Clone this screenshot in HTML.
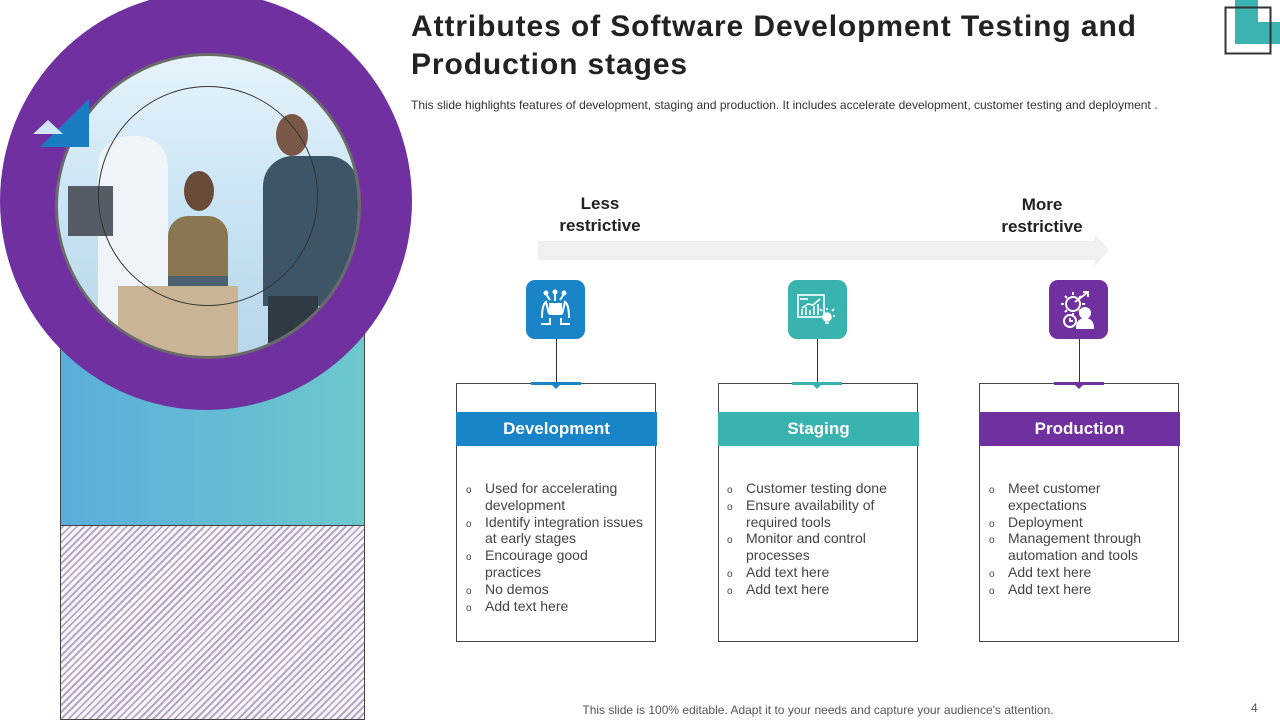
<!DOCTYPE html>
<html><head><meta charset="utf-8"><style>
*{margin:0;padding:0;box-sizing:border-box}
body{width:1280px;height:720px;background:#fff;position:relative;overflow:hidden;font-family:"Liberation Sans",sans-serif;color:#404040}
.abs{position:absolute}
.title{left:411px;top:8px;font-size:30px;font-weight:bold;color:#222;line-height:38px;letter-spacing:0.9px}
.sub{left:411px;top:98px;font-size:12px;color:#333;letter-spacing:0}
.lbl{font-weight:bold;font-size:17px;color:#222;text-align:center;line-height:22px;width:140px}
.icon{width:59px;height:59px;border-radius:9px;top:280px}
.vl{width:1px;background:#333;top:339px;height:44px}
.box{top:383px;width:200px;height:259px;border:1px solid #444;background:#fff}
.bar{top:412px;width:201px;height:34px;color:#fff;font-weight:bold;font-size:17px;text-align:center;line-height:34px}
.tab{top:382px;width:50px;height:3px}
.tri{top:384px;width:0;height:0;border-left:5px solid transparent;border-right:5px solid transparent;border-top:5px solid}
ul{list-style:none;font-size:14px;line-height:16.8px;color:#444}
ul li{padding-left:29px;position:relative}
ul li:before{content:"o";position:absolute;left:10px;top:3px;font-size:10px}
</style></head><body>
<div class="abs" style="left:60px;top:320px;width:305px;height:206px;background:linear-gradient(90deg,#5aaedb,#6cc8cc);border:1px solid #444;border-bottom:1px solid #333"></div>
<div class="abs" style="left:60px;top:525px;width:305px;height:195px;border:1px solid #444;background:repeating-linear-gradient(-45deg,#fbf4fb 0 3px,#b4a8c6 3px 5px)"></div>
<div class="abs" style="left:0;top:-8px;width:412px;height:418px;border-radius:50%;background:#7030a0"></div>
<div class="abs" style="left:55px;top:53px;width:306px;height:306px;border-radius:50%;background:#6a6a6a"></div>
<div class="abs" style="left:58px;top:56px;width:300px;height:300px;border-radius:50%;overflow:hidden;background:linear-gradient(180deg,#e6f3fb 0%,#c9e4f4 50%,#b7d6e8 100%)">
  <div class="abs" style="left:40px;top:80px;width:70px;height:200px;background:#eef4f8;border-radius:30px"></div>
  <div class="abs" style="left:10px;top:130px;width:45px;height:50px;background:#555c66"></div>
  <div class="abs" style="left:110px;top:160px;width:60px;height:140px;background:#8a7752;border-radius:20px 20px 0 0"></div>
  <div class="abs" style="left:126px;top:115px;width:30px;height:40px;background:#6a4a38;border-radius:50%"></div>
  <div class="abs" style="left:110px;top:220px;width:60px;height:60px;background:#4d6070"></div>
  <div class="abs" style="left:205px;top:100px;width:95px;height:150px;background:#3d5566;border-radius:30px 30px 0 0"></div>
  <div class="abs" style="left:218px;top:58px;width:32px;height:42px;background:#7a5848;border-radius:50%"></div>
  <div class="abs" style="left:210px;top:240px;width:50px;height:70px;background:#2e3a44"></div>
  <div class="abs" style="left:60px;top:230px;width:120px;height:70px;background:#c9b596"></div>
  <div class="abs" style="left:40px;top:30px;width:220px;height:220px;border-radius:50%;border:1px solid #333"></div>
</div>
<svg class="abs" style="left:30px;top:95px" width="62" height="55"><polygon points="59,4 59,52 10,52" fill="#1a7dc4"/><polygon points="3,39 33,39 18,25" fill="#cfe6f6"/></svg>
<svg class="abs" style="left:1222px;top:0" width="58" height="58"><polygon points="13,0 36,0 36,22 58,22 58,44 13,44" fill="#3bb3b0"/><rect x="3.5" y="7.5" width="45" height="46" fill="none" stroke="#333" stroke-width="2"/></svg>
<div class="abs title">Attributes of Software Development Testing and<br>Production stages</div>
<div class="abs sub">This slide highlights features of development, staging and production. It includes accelerate development, customer testing and deployment .</div>
<svg class="abs" style="left:538px;top:234px" width="572" height="32"><polygon points="0,7 557,7 557,0 571,16 557,32 557,26 0,26" fill="#f0f0f0"/></svg>
<div class="abs lbl" style="left:530px;top:193px">Less<br>restrictive</div>
<div class="abs lbl" style="left:972px;top:194px">More<br>restrictive</div>
<div class="abs icon" style="left:526px;background:#1a84c9"><svg width="59" height="59" fill="none" stroke="#fff" stroke-width="2"><path d="M16 38c0-8 1-14 4-16l3 12M43 38c0-8-1-14-4-16l-3 12"/><path d="M15 44h9v-6M44 44h-9v-6" /><rect x="24" y="24" width="11" height="10" fill="#fff"/><path d="M29 21v-8M24 20l-4-6M34 20l4-6"/><circle cx="29" cy="12" r="1.5" fill="#fff"/><circle cx="20" cy="13" r="1.5" fill="#fff"/><circle cx="38" cy="13" r="1.5" fill="#fff"/></svg></div>
<div class="abs icon" style="left:788px;background:#38b3b0"><svg width="59" height="59" fill="none" stroke="#fff" stroke-width="1.6"><rect x="10" y="15" width="26" height="22"/><path d="M12 19h8"/><path d="M14 35v-6M18 35v-8M22 35v-5M26 35v-9M30 35v-11M14 28l6-4 5 1 7-6"/><circle cx="39" cy="37" r="4" fill="#fff"/><path d="M37 43h4M39 30v-2M45 36h2M44 31l2-2M34 31l-2-2"/></svg></div>
<div class="abs icon" style="left:1049px;background:#7030a0"><svg width="59" height="59" fill="none" stroke="#fff" stroke-width="2"><circle cx="24" cy="24" r="7"/><path d="M24 12v3M24 33v3M12 24h3M33 24h3M16 16l2 2M30 30l2 2M32 16l-2 2M16 32l2-2"/><path d="M26 22l13-10M34 12h5v5"/><circle cx="21" cy="41" r="6"/><path d="M21 38v3h3"/><circle cx="36" cy="33" r="5" fill="#fff"/><path d="M28 48c0-6 3-9 8-9s8 3 8 9z" fill="#fff"/></svg></div>
<div class="abs vl" style="left:556px"></div>
<div class="abs vl" style="left:817px"></div>
<div class="abs vl" style="left:1079px"></div>
<div class="abs box" style="left:456px"></div>
<div class="abs box" style="left:718px"></div>
<div class="abs box" style="left:979px"></div>
<div class="abs tab" style="left:531px;background:#1a84c9"></div>
<div class="abs tab" style="left:792px;background:#38b3b0"></div>
<div class="abs tab" style="left:1054px;background:#7030a0"></div>
<div class="abs tri" style="left:551px;border-top-color:#1a84c9"></div>
<div class="abs tri" style="left:812px;border-top-color:#38b3b0"></div>
<div class="abs tri" style="left:1074px;border-top-color:#7030a0"></div>
<div class="abs bar" style="left:456px;background:#1a84c9">Development</div>
<div class="abs bar" style="left:718px;background:#38b3b0">Staging</div>
<div class="abs bar" style="left:979px;background:#7030a0">Production</div>
<ul class="abs" style="left:456px;top:480px;width:188px"><li>Used  for accelerating development</li><li>Identify integration issues at early stages</li><li>Encourage good practices</li><li>No demos</li><li>Add text here</li></ul>
<ul class="abs" style="left:717px;top:480px;width:188px"><li>Customer testing done</li><li>Ensure availability of required tools</li><li>Monitor and control processes</li><li>Add text here</li><li>Add text here</li></ul>
<ul class="abs" style="left:979px;top:480px;width:188px"><li>Meet customer expectations</li><li>Deployment</li><li>Management through automation and tools</li><li>Add text here</li><li>Add text here</li></ul>
<div class="abs" style="left:540px;top:703px;width:556px;text-align:center;font-size:12px;color:#555">This slide is 100% editable. Adapt it to your needs and capture your audience's attention.</div>
<div class="abs" style="left:1251px;top:701px;font-size:12px;color:#555">4</div>
</body></html>
